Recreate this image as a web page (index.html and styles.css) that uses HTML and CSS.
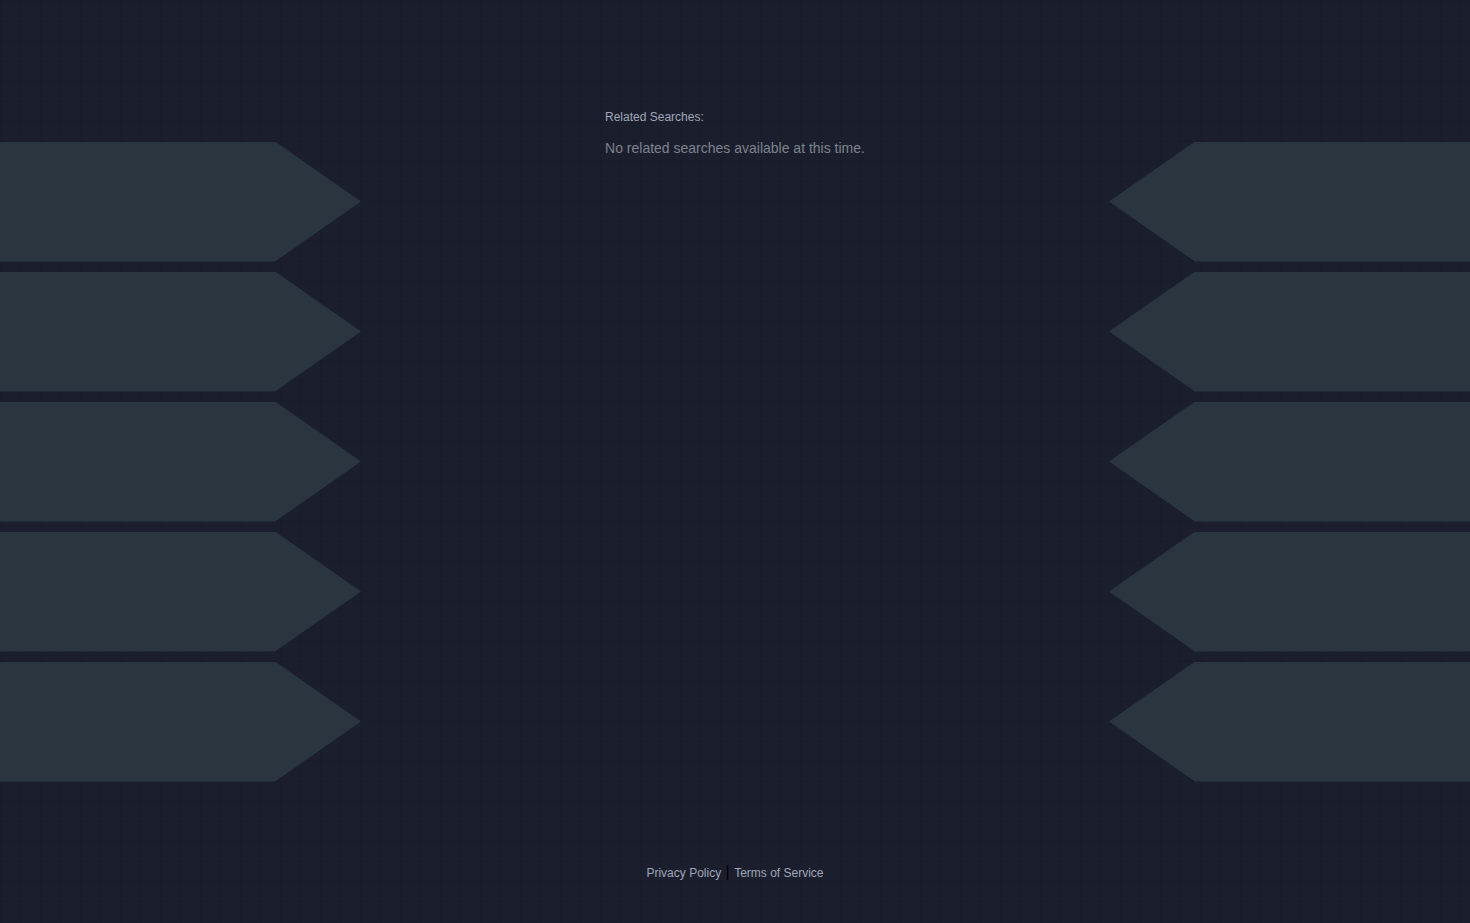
FILE: index.html
```html
<!DOCTYPE html>
<html lang="en">
<head>
<meta charset="utf-8">
<meta name="viewport" content="width=device-width, initial-scale=1">
<title>Related Searches</title>
<link rel="stylesheet" href="styles.css">
</head>
<body>

<div class="page">
   <div class="arrows arrows-left">
      <div class="arrow"></div>
      <div class="arrow"></div>
      <div class="arrow"></div>
      <div class="arrow"></div>
      <div class="arrow"></div>
   </div>

   <div class="content">
      <main class="related">
         <h1 class="related-title">Related Searches:</h1>
         <p class="related-empty">No related searches available at this time.</p>
      </main>

      <footer class="footer">
         <a href="#">Privacy Policy</a> | <a href="#">Terms of Service</a>
      </footer>
   </div>

   <div class="arrows arrows-right">
      <div class="arrow"></div>
      <div class="arrow"></div>
      <div class="arrow"></div>
      <div class="arrow"></div>
      <div class="arrow"></div>
   </div>
</div>

</body>
</html>
```
FILE: styles.css
```css
* {
   box-sizing: border-box;
}

body {
   margin: 0;
   font-family: "Liberation Sans", Arial, Helvetica, sans-serif;
   font-size: 16px;
   color: #000;
   background-color: #1b1f2d;
   /* thin 20px grid */
   background-image:
      linear-gradient(rgba(16, 24, 36, 0.16) 2px, transparent 2px),
      linear-gradient(90deg, rgba(16, 24, 36, 0.16) 2px, transparent 2px);
   background-size: 20px 20px;
}

.page {
   display: grid;
   grid-template-columns: 1fr minmax(300px, 748px) 1fr;
   min-height: 100vh;
}

.arrows {
   display: flex;
   flex-direction: column;
   justify-content: center;
   gap: 10px;
}

.arrow {
   height: 120px;
   background-color: #2b3540;
   clip-path: polygon(0 0, calc(100% - 86px) 0, 100% 50%, calc(100% - 86px) 100%, 0 100%);
}

.arrows-right .arrow {
   clip-path: polygon(86px 0, 100% 0, 100% 100%, 86px 100%, 0 50%);
}

.content {
   display: flex;
   flex-direction: column;
   align-items: center;
   justify-content: space-between;
   padding: 110px 0 41px;
}

.related-title {
   margin: 0 0 16px;
   font-size: 12px;
   line-height: 14px;
   font-weight: normal;
   color: #a0a6b8;
}

.related-empty {
   margin: 0;
   font-size: 14px;
   line-height: 16px;
   color: #7e828e;
}

.footer {
   line-height: 18px;
}

.footer a {
   font-size: 12px;
   color: #a0a6b8;
   text-decoration: none;
}

.footer a:hover {
   text-decoration: underline;
}
```
